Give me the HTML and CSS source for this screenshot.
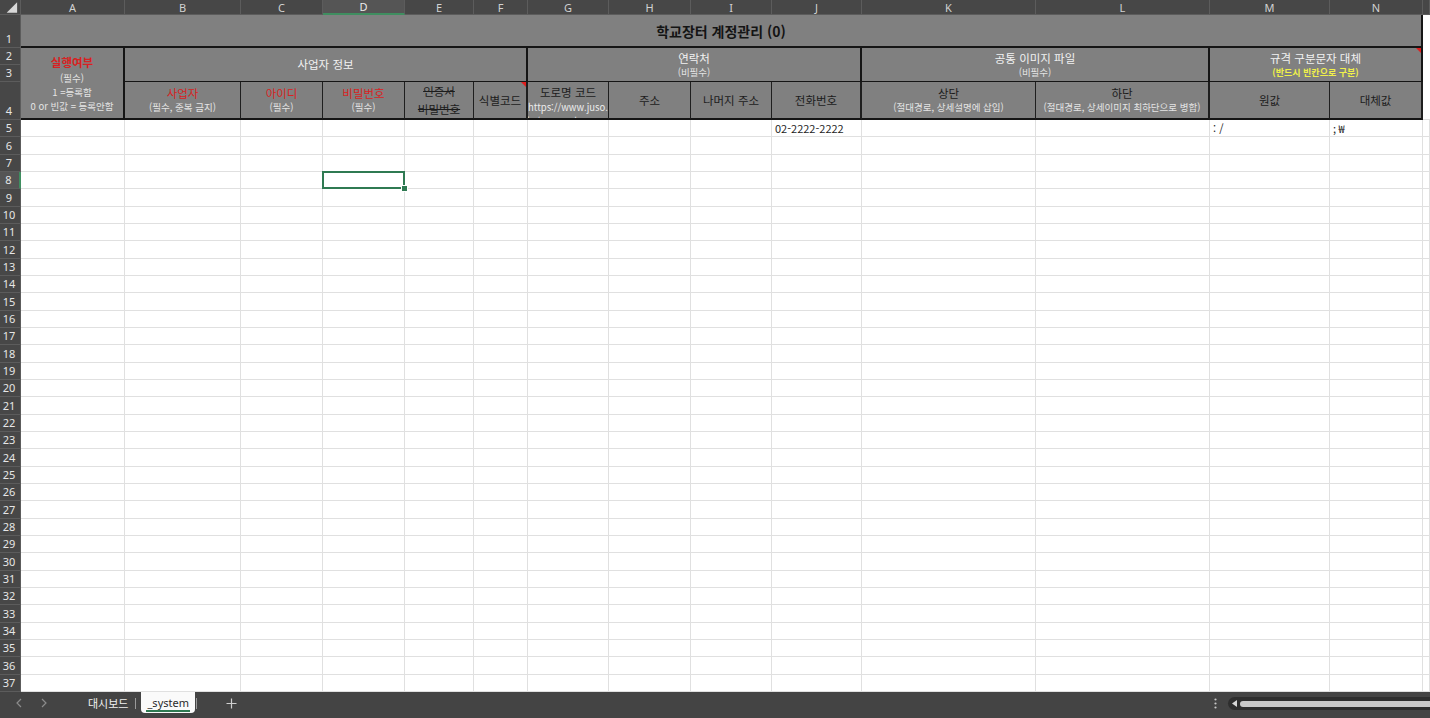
FILE: index.html
```html
<!DOCTYPE html>
<html lang="ko">
<head>
<meta charset="utf-8">
<title>학교장터 계정관리</title>
<link rel="stylesheet" href="styles.css">
</head>
<body>
<div class="app">
  <div class="sheet">
    <div class="cols head">
      <div class="corner"><svg class="tri" width="21" height="15" viewBox="0 0 21 15"><path d="M18 2 V13 H7 Z" fill="#d8d8d8"/></svg></div>
      <div class="ch">A</div><div class="ch">B</div><div class="ch">C</div><div class="ch sel">D</div><div class="ch">E</div><div class="ch">F</div><div class="ch">G</div><div class="ch">H</div><div class="ch">I</div><div class="ch">J</div><div class="ch">K</div><div class="ch">L</div><div class="ch">M</div><div class="ch">N</div><div class="ch"></div>

      <div class="rh">1</div>
      <div class="title">학교장터 계정관리 (0)</div>
      <div class="ocol"></div>

      <div class="rh">2</div>
      <div class="exec">
        <div class="lbl red b">실행여부</div>
        <div class="sub">(필수)</div>
        <div class="sub">1 =등록함</div>
        <div class="sub">0 or 빈값 = 등록안함</div>
      </div>
      <div class="grp g5"><div class="lbl lt">사업자 정보</div></div>
      <div class="grp g4"><div class="lbl lt">연락처</div><div class="sub">(비필수)</div></div>
      <div class="grp g2"><div class="lbl lt">공통 이미지 파일</div><div class="sub">(비필수)</div></div>
      <div class="grp g2 note"><div class="lbl lt">규격 구분문자 대체</div><div class="sub yel">(반드시 빈칸으로 구분)</div></div>

      <div class="rh">3</div>
      <div class="rh">4</div>
      <div class="fld"><div class="lbl red">사업자</div><div class="sub">(필수, 중복 금지)</div></div>
      <div class="fld"><div class="lbl red">아이디</div><div class="sub">(필수)</div></div>
      <div class="fld"><div class="lbl red">비밀번호</div><div class="sub">(필수)</div></div>
      <div class="fld"><div class="lbl strike">인증서</div><div class="lbl strike">비밀번호</div></div>
      <div class="fld end note"><div class="lbl">식별코드</div></div>
      <div class="fld top"><div class="lbl">도로명 코드</div><div class="sub url">https://www.juso.</div><div class="sub url">go.kr/openIndexPage.do</div></div>
      <div class="fld"><div class="lbl">주소</div></div>
      <div class="fld"><div class="lbl">나머지 주소</div></div>
      <div class="fld end"><div class="lbl">전화번호</div></div>
      <div class="fld"><div class="lbl">상단</div><div class="sub">(절대경로, 상세설명에 삽입)</div></div>
      <div class="fld end"><div class="lbl">하단</div><div class="sub">(절대경로, 상세이미지 최하단으로 병합)</div></div>
      <div class="fld"><div class="lbl">원값</div></div>
      <div class="fld end"><div class="lbl">대체값</div></div>
    </div>

    <div class="cols body">
      <div class="rh">5</div><span class="c"></span><span class="c"></span><span class="c"></span><span class="c"></span><span class="c"></span><span class="c"></span><span class="c"></span><span class="c"></span><span class="c"></span><span class="c">02-2222-2222</span><span class="c"></span><span class="c"></span><span class="c">: /</span><span class="c">;&nbsp;₩</span><span class="c"></span>
      <div class="rh">6</div><span class="c"></span><span class="c"></span><span class="c"></span><span class="c"></span><span class="c"></span><span class="c"></span><span class="c"></span><span class="c"></span><span class="c"></span><span class="c"></span><span class="c"></span><span class="c"></span><span class="c"></span><span class="c"></span><span class="c"></span>
      <div class="rh">7</div><span class="c"></span><span class="c"></span><span class="c"></span><span class="c"></span><span class="c"></span><span class="c"></span><span class="c"></span><span class="c"></span><span class="c"></span><span class="c"></span><span class="c"></span><span class="c"></span><span class="c"></span><span class="c"></span><span class="c"></span>
      <div class="rh sel">8</div><span class="c"></span><span class="c"></span><span class="c"></span><span class="c cur"></span><span class="c"></span><span class="c"></span><span class="c"></span><span class="c"></span><span class="c"></span><span class="c"></span><span class="c"></span><span class="c"></span><span class="c"></span><span class="c"></span><span class="c"></span>
      <div class="rh">9</div><span class="c"></span><span class="c"></span><span class="c"></span><span class="c"></span><span class="c"></span><span class="c"></span><span class="c"></span><span class="c"></span><span class="c"></span><span class="c"></span><span class="c"></span><span class="c"></span><span class="c"></span><span class="c"></span><span class="c"></span>
      <div class="rh">10</div><span class="c"></span><span class="c"></span><span class="c"></span><span class="c"></span><span class="c"></span><span class="c"></span><span class="c"></span><span class="c"></span><span class="c"></span><span class="c"></span><span class="c"></span><span class="c"></span><span class="c"></span><span class="c"></span><span class="c"></span>
      <div class="rh">11</div><span class="c"></span><span class="c"></span><span class="c"></span><span class="c"></span><span class="c"></span><span class="c"></span><span class="c"></span><span class="c"></span><span class="c"></span><span class="c"></span><span class="c"></span><span class="c"></span><span class="c"></span><span class="c"></span><span class="c"></span>
      <div class="rh">12</div><span class="c"></span><span class="c"></span><span class="c"></span><span class="c"></span><span class="c"></span><span class="c"></span><span class="c"></span><span class="c"></span><span class="c"></span><span class="c"></span><span class="c"></span><span class="c"></span><span class="c"></span><span class="c"></span><span class="c"></span>
      <div class="rh">13</div><span class="c"></span><span class="c"></span><span class="c"></span><span class="c"></span><span class="c"></span><span class="c"></span><span class="c"></span><span class="c"></span><span class="c"></span><span class="c"></span><span class="c"></span><span class="c"></span><span class="c"></span><span class="c"></span><span class="c"></span>
      <div class="rh">14</div><span class="c"></span><span class="c"></span><span class="c"></span><span class="c"></span><span class="c"></span><span class="c"></span><span class="c"></span><span class="c"></span><span class="c"></span><span class="c"></span><span class="c"></span><span class="c"></span><span class="c"></span><span class="c"></span><span class="c"></span>
      <div class="rh">15</div><span class="c"></span><span class="c"></span><span class="c"></span><span class="c"></span><span class="c"></span><span class="c"></span><span class="c"></span><span class="c"></span><span class="c"></span><span class="c"></span><span class="c"></span><span class="c"></span><span class="c"></span><span class="c"></span><span class="c"></span>
      <div class="rh">16</div><span class="c"></span><span class="c"></span><span class="c"></span><span class="c"></span><span class="c"></span><span class="c"></span><span class="c"></span><span class="c"></span><span class="c"></span><span class="c"></span><span class="c"></span><span class="c"></span><span class="c"></span><span class="c"></span><span class="c"></span>
      <div class="rh">17</div><span class="c"></span><span class="c"></span><span class="c"></span><span class="c"></span><span class="c"></span><span class="c"></span><span class="c"></span><span class="c"></span><span class="c"></span><span class="c"></span><span class="c"></span><span class="c"></span><span class="c"></span><span class="c"></span><span class="c"></span>
      <div class="rh">18</div><span class="c"></span><span class="c"></span><span class="c"></span><span class="c"></span><span class="c"></span><span class="c"></span><span class="c"></span><span class="c"></span><span class="c"></span><span class="c"></span><span class="c"></span><span class="c"></span><span class="c"></span><span class="c"></span><span class="c"></span>
      <div class="rh">19</div><span class="c"></span><span class="c"></span><span class="c"></span><span class="c"></span><span class="c"></span><span class="c"></span><span class="c"></span><span class="c"></span><span class="c"></span><span class="c"></span><span class="c"></span><span class="c"></span><span class="c"></span><span class="c"></span><span class="c"></span>
      <div class="rh">20</div><span class="c"></span><span class="c"></span><span class="c"></span><span class="c"></span><span class="c"></span><span class="c"></span><span class="c"></span><span class="c"></span><span class="c"></span><span class="c"></span><span class="c"></span><span class="c"></span><span class="c"></span><span class="c"></span><span class="c"></span>
      <div class="rh">21</div><span class="c"></span><span class="c"></span><span class="c"></span><span class="c"></span><span class="c"></span><span class="c"></span><span class="c"></span><span class="c"></span><span class="c"></span><span class="c"></span><span class="c"></span><span class="c"></span><span class="c"></span><span class="c"></span><span class="c"></span>
      <div class="rh">22</div><span class="c"></span><span class="c"></span><span class="c"></span><span class="c"></span><span class="c"></span><span class="c"></span><span class="c"></span><span class="c"></span><span class="c"></span><span class="c"></span><span class="c"></span><span class="c"></span><span class="c"></span><span class="c"></span><span class="c"></span>
      <div class="rh">23</div><span class="c"></span><span class="c"></span><span class="c"></span><span class="c"></span><span class="c"></span><span class="c"></span><span class="c"></span><span class="c"></span><span class="c"></span><span class="c"></span><span class="c"></span><span class="c"></span><span class="c"></span><span class="c"></span><span class="c"></span>
      <div class="rh">24</div><span class="c"></span><span class="c"></span><span class="c"></span><span class="c"></span><span class="c"></span><span class="c"></span><span class="c"></span><span class="c"></span><span class="c"></span><span class="c"></span><span class="c"></span><span class="c"></span><span class="c"></span><span class="c"></span><span class="c"></span>
      <div class="rh">25</div><span class="c"></span><span class="c"></span><span class="c"></span><span class="c"></span><span class="c"></span><span class="c"></span><span class="c"></span><span class="c"></span><span class="c"></span><span class="c"></span><span class="c"></span><span class="c"></span><span class="c"></span><span class="c"></span><span class="c"></span>
      <div class="rh">26</div><span class="c"></span><span class="c"></span><span class="c"></span><span class="c"></span><span class="c"></span><span class="c"></span><span class="c"></span><span class="c"></span><span class="c"></span><span class="c"></span><span class="c"></span><span class="c"></span><span class="c"></span><span class="c"></span><span class="c"></span>
      <div class="rh">27</div><span class="c"></span><span class="c"></span><span class="c"></span><span class="c"></span><span class="c"></span><span class="c"></span><span class="c"></span><span class="c"></span><span class="c"></span><span class="c"></span><span class="c"></span><span class="c"></span><span class="c"></span><span class="c"></span><span class="c"></span>
      <div class="rh">28</div><span class="c"></span><span class="c"></span><span class="c"></span><span class="c"></span><span class="c"></span><span class="c"></span><span class="c"></span><span class="c"></span><span class="c"></span><span class="c"></span><span class="c"></span><span class="c"></span><span class="c"></span><span class="c"></span><span class="c"></span>
      <div class="rh">29</div><span class="c"></span><span class="c"></span><span class="c"></span><span class="c"></span><span class="c"></span><span class="c"></span><span class="c"></span><span class="c"></span><span class="c"></span><span class="c"></span><span class="c"></span><span class="c"></span><span class="c"></span><span class="c"></span><span class="c"></span>
      <div class="rh">30</div><span class="c"></span><span class="c"></span><span class="c"></span><span class="c"></span><span class="c"></span><span class="c"></span><span class="c"></span><span class="c"></span><span class="c"></span><span class="c"></span><span class="c"></span><span class="c"></span><span class="c"></span><span class="c"></span><span class="c"></span>
      <div class="rh">31</div><span class="c"></span><span class="c"></span><span class="c"></span><span class="c"></span><span class="c"></span><span class="c"></span><span class="c"></span><span class="c"></span><span class="c"></span><span class="c"></span><span class="c"></span><span class="c"></span><span class="c"></span><span class="c"></span><span class="c"></span>
      <div class="rh">32</div><span class="c"></span><span class="c"></span><span class="c"></span><span class="c"></span><span class="c"></span><span class="c"></span><span class="c"></span><span class="c"></span><span class="c"></span><span class="c"></span><span class="c"></span><span class="c"></span><span class="c"></span><span class="c"></span><span class="c"></span>
      <div class="rh">33</div><span class="c"></span><span class="c"></span><span class="c"></span><span class="c"></span><span class="c"></span><span class="c"></span><span class="c"></span><span class="c"></span><span class="c"></span><span class="c"></span><span class="c"></span><span class="c"></span><span class="c"></span><span class="c"></span><span class="c"></span>
      <div class="rh">34</div><span class="c"></span><span class="c"></span><span class="c"></span><span class="c"></span><span class="c"></span><span class="c"></span><span class="c"></span><span class="c"></span><span class="c"></span><span class="c"></span><span class="c"></span><span class="c"></span><span class="c"></span><span class="c"></span><span class="c"></span>
      <div class="rh">35</div><span class="c"></span><span class="c"></span><span class="c"></span><span class="c"></span><span class="c"></span><span class="c"></span><span class="c"></span><span class="c"></span><span class="c"></span><span class="c"></span><span class="c"></span><span class="c"></span><span class="c"></span><span class="c"></span><span class="c"></span>
      <div class="rh">36</div><span class="c"></span><span class="c"></span><span class="c"></span><span class="c"></span><span class="c"></span><span class="c"></span><span class="c"></span><span class="c"></span><span class="c"></span><span class="c"></span><span class="c"></span><span class="c"></span><span class="c"></span><span class="c"></span><span class="c"></span>
      <div class="rh">37</div><span class="c"></span><span class="c"></span><span class="c"></span><span class="c"></span><span class="c"></span><span class="c"></span><span class="c"></span><span class="c"></span><span class="c"></span><span class="c"></span><span class="c"></span><span class="c"></span><span class="c"></span><span class="c"></span><span class="c"></span>
    </div>
  </div>

  <div class="tabs">
    <div class="nav"><svg width="6" height="10" viewBox="0 0 6 10"><path d="M5 1 L1 5 L5 9" fill="none" stroke="#8c8c8c" stroke-width="1.2"/></svg></div>
    <div class="nav"><svg width="6" height="10" viewBox="0 0 6 10"><path d="M1 1 L5 5 L1 9" fill="none" stroke="#8c8c8c" stroke-width="1.2"/></svg></div>
    <div class="tab">대시보드</div>
    <div class="sep"></div>
    <div class="tab active">_system</div>
    <div class="sep"></div>
    <div class="add"><svg width="11" height="11" viewBox="0 0 11 11"><path d="M5.5 0.5 V10.5 M0.5 5.5 H10.5" stroke="#cfcfcf" stroke-width="1.2"/></svg></div>
    <div class="more"><svg width="3" height="11" viewBox="0 0 3 11"><circle cx="1.5" cy="1.5" r="1.1" fill="#c8c8c8"/><circle cx="1.5" cy="5.5" r="1.1" fill="#c8c8c8"/><circle cx="1.5" cy="9.5" r="1.1" fill="#c8c8c8"/></svg></div>
    <div class="hscroll">
      <svg width="5" height="7" viewBox="0 0 5 7"><path d="M5 0 V7 L0 3.5 Z" fill="#d8d8d8"/></svg>
      <div class="thumb"></div>
    </div>
  </div>
</div>
</body>
</html>
```

FILE: styles.css
```css
* { box-sizing: border-box; margin: 0; padding: 0; }
html, body { width: 1430px; height: 718px; overflow: hidden; background: #fff; }
body { font-family: "Noto Sans CJK KR", "Noto Sans", sans-serif; }

.app { display: flex; flex-direction: column; height: 718px; }
.sheet { flex: 1; display: flex; flex-direction: column; overflow: hidden; }

.cols {
  display: grid;
  grid-template-columns: 21px 104px 116px 82px 82px 69px 54px 81px 82px 81px 90px 174px 174px 120px 93px 1fr;
}
.head { grid-template-rows: 15px 33px 17px 17px 38px; }
.body { grid-template-rows: repeat(33, 1fr); height: 572px; }

/* headers */
.corner { background: #474747; border-right: 1px solid #5c5c5c; border-bottom: 1px solid #5c5c5c; display: flex; }
.ch {
  background: #474747; color: #d2d2d2;
  font-family: "Noto Sans", sans-serif; font-size: 11px;
  display: flex; align-items: center; justify-content: center;
  border-right: 1px solid #5c5c5c; border-bottom: 1px solid #5c5c5c;
}
.ch.sel { background: #555; color: #ececec; border-bottom: 2px solid #3f8e60; }
.rh {
  background: #474747; color: #e6e6e6;
  font-family: "Noto Sans", sans-serif; font-size: 11px; line-height: 14px;
  display: flex; align-items: flex-end; justify-content: center;
  padding: 0 2px 1px 0;
  border-right: 1px solid #5c5c5c; border-bottom: 1px solid #5c5c5c;
}
.rh.sel { background: #555; border-right: 2px solid #3f8e60; }

/* header block */
.title {
  grid-column: span 14; background: #808080;
  border-right: 2px solid #151515; border-bottom: 2px solid #151515;
  display: flex; align-items: center; justify-content: center;
  font-size: 14px; font-weight: 700; color: #141414;
}
.ocol { grid-row: span 4; border-bottom: 1px solid #e0e0e0; }
.exec {
  grid-row: span 3; background: #808080;
  border-right: 2px solid #151515; border-bottom: 2px solid #151515;
  display: flex; flex-direction: column; align-items: center; justify-content: center;
}
.exec .lbl { line-height: 17px; }
.exec .sub { line-height: 14px; }
.grp {
  grid-row: span 2; background: #808080;
  border-right: 2px solid #151515; border-bottom: 1px solid #151515;
  display: flex; flex-direction: column; align-items: center; justify-content: center;
  position: relative;
}
.g5 { grid-column: span 5; }
.g4 { grid-column: span 4; }
.g2 { grid-column: span 2; }
.fld {
  background: #808080;
  border-right: 1px solid #1e1e1e; border-bottom: 2px solid #151515;
  display: flex; flex-direction: column; align-items: center; justify-content: center;
  overflow: hidden; position: relative;
}
.fld.end { border-right-width: 2px; }
.fld.top { justify-content: flex-start; padding-top: 3px; }
.fld.top .sub { line-height: 14px; }

.lbl { font-size: 11.5px; line-height: 15px; color: #1c1c1c; white-space: nowrap; }
.lbl.lt { color: #f2f2f2; }
.lbl.red { color: #d82222; }
.lbl.b { font-weight: 700; }
.lbl.strike { text-decoration: line-through; line-height: 18px; }
.sub { font-size: 9.5px; line-height: 13px; color: #e4e4e4; white-space: nowrap; }
.sub.yel { color: #f0f04a; font-weight: 700; font-size: 9px; }
.sub.url { color: #ececec; }
.note::after {
  content: ""; position: absolute; top: 0; right: 0;
  border-top: 5px solid #e01e1e; border-left: 5px solid transparent;
}

/* body cells */
.c {
  border-right: 1px solid #e0e0e0; border-bottom: 1px solid #e0e0e0;
  font-size: 11px; line-height: 14px; color: #1e1e1e;
  padding: 0 0 1px 3px;
  display: flex; align-items: flex-end; white-space: nowrap;
  position: relative;
}
.c.cur { z-index: 2; }
.c.cur::after {
  content: ""; position: absolute; left: -1px; top: -1px; right: -1px; bottom: -1px;
  border: 2px solid #2f7a52;
}
.c.cur::before {
  content: ""; position: absolute; right: -4px; bottom: -4px; width: 5px; height: 5px;
  background: #2f7a52; border: 1px solid #fff; z-index: 3;
}

/* sheet tabs */
.tabs {
  height: 26px; background: #444; display: flex; align-items: flex-start;
  padding-left: 6px; color: #f0f0f0;
}
.nav { width: 25px; height: 22px; display: flex; align-items: center; justify-content: center; }
.tab {
  height: 21px; padding: 0 6px; display: flex; align-items: center;
  font-size: 11px; white-space: nowrap;
}
.tabs .nav + .tab { margin-left: 26px; }
.tab.active {
  background: #fafafa; color: #2a2a2a; border-radius: 0 0 4px 4px;
  font-family: "Noto Sans", sans-serif; font-size: 11px;
  margin-left: 5px; position: relative;
}
.tab.active::after {
  content: ""; position: absolute; left: 5px; right: 5px; bottom: 1px; height: 2px; background: #2f7a52;
}
.sep { width: 1px; height: 11px; background: #9a9a9a; margin-top: 6px; margin-left: 1px; }
.add { width: 20px; height: 22px; margin-left: 25px; display: flex; align-items: center; justify-content: center; }
.more { margin-left: auto; width: 12px; height: 22px; display: flex; align-items: center; justify-content: center; }
.hscroll {
  width: 202px; height: 13px; margin-top: 5px; margin-left: 7px;
  background: #2e2e2e; border-radius: 7px 0 0 7px;
  display: flex; align-items: center; gap: 3px; padding-left: 4px;
}
.thumb { flex: 1; height: 6px; background: #c9c9c9; border-radius: 3px 0 0 3px; }
```
